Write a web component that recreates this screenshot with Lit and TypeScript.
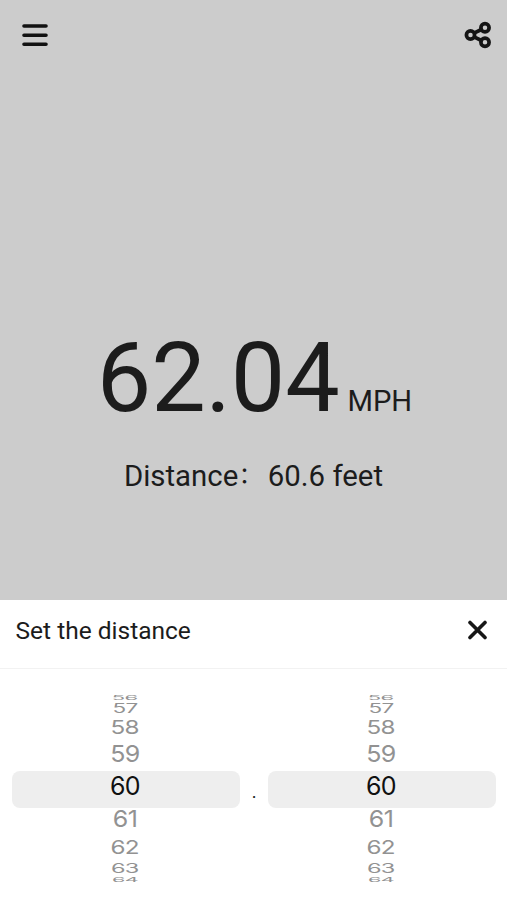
import { LitElement, html, css } from "lit";
import { customElement } from "lit/decorators.js";
import { styleMap } from "lit/directives/style-map.js";

interface Row {
  value: number;
  height: number;
  sx: number;
  sy: number;
}

// Rows of the drum: they flatten towards its upper and lower rim.
const ROWS: Row[] = [
  { value: 56, height: 5.6, sx: 0.88, sy: 0.25 },
  { value: 57, height: 15.6, sx: 0.9, sy: 0.5 },
  { value: 58, height: 23, sx: 0.97, sy: 0.77 },
  { value: 59, height: 31.2, sx: 1, sy: 0.94 },
  { value: 60, height: 33, sx: 1, sy: 1.02 },
  { value: 61, height: 32.4, sx: 1, sy: 0.94 },
  { value: 62, height: 23.4, sx: 0.97, sy: 0.77 },
  { value: 63, height: 18, sx: 0.94, sy: 0.52 },
  { value: 64, height: 5.4, sx: 0.86, sy: 0.25 },
];

@customElement("wheel-picker")
class WheelPicker extends LitElement {
  static styles = css`
    :host {
      display: block;
      position: relative;
      width: 228px;
      padding-top: 25px;
      box-sizing: border-box;
      height: 230px;
    }
    .band {
      position: absolute;
      left: 0;
      right: 0;
      top: 101px;
      height: 37px;
      border-radius: 8px;
      background: #eeeeee;
    }
    .rows {
      position: relative;
      display: flex;
      flex-direction: column;
      align-items: center;
      padding-right: 2px;
    }
    .row {
      display: flex;
      align-items: center;
      justify-content: center;
      font: 400 25px/1 Inter, sans-serif;
      letter-spacing: -0.7px;
      color: #929292;
    }
    .selected {
      color: #101010;
    }
  `;

  render() {
    return html`
      <div class="band"></div>
      <div class="rows">
        ${ROWS.map(
          (r) => html`<div
            class="row ${r.value === 60 ? "selected" : ""}"
            style=${styleMap({ height: `${r.height}px` })}
          ><span style=${styleMap({ transform: `scale(${r.sx}, ${r.sy})`, display: "block" })}>${r.value}</span></div>`
        )}
      </div>
    `;
  }
}

@customElement("app-root")
class AppRoot extends LitElement {
  static styles = css`
    :host {
      display: flex;
      flex-direction: column;
      width: 507px;
      height: 900px;
      overflow: hidden;
      background: #cccccc;
      color: #1c1c1c;
      font-family: Roboto, "Noto Sans CJK SC", sans-serif;
    }
    .bar {
      display: flex;
      justify-content: space-between;
      align-items: center;
      height: 70px;
      padding: 0 15px 0 21px;
      box-sizing: border-box;
      flex: none;
    }
    svg {
      display: block;
    }
    .reading {
      height: 530px;
      flex: none;
      display: flex;
      flex-direction: column;
      align-items: center;
      padding-top: 253px;
      box-sizing: border-box;
    }
    .speed {
      display: flex;
      align-items: baseline;
      gap: 8px;
      height: 110px;
      line-height: 110px;
      padding-left: 2px;
    }
    .number {
      font-size: 97px;
      letter-spacing: -0.2px;
    }
    .unit {
      font-size: 29.2px;
    }
    .distance {
      display: flex;
      margin-top: 23px;
      font-size: 29.4px;
      line-height: 40px;
      white-space: pre;
    }
    .colon {
      width: 29.5px;
      font: 400 23px/34px "Noto Sans CJK SC", sans-serif;
      text-indent: 0.5px;
    }
    .sheet {
      height: 300px;
      flex: none;
      background: #ffffff;
    }
    .head {
      display: flex;
      align-items: center;
      justify-content: space-between;
      height: 69px;
      padding: 0 19px 8px 15.5px;
      box-sizing: border-box;
      border-bottom: 1px solid #f2f2f2;
      font-size: 24.5px;
    }
    .wheels {
      display: flex;
      justify-content: space-between;
      padding: 1px 11px 0 12px;
    }
    .point {
      font: 400 16px/20px Inter, sans-serif;
      padding-top: 112px;
    }
  `;

  render() {
    return html`
      <div class="bar">
        <svg width="28" height="26" viewBox="0 0 28 26" fill="none" stroke="#111" stroke-width="3.6" stroke-linecap="round">
          <path d="M3 4h22M3 13.2h22M3 22.3h22" />
        </svg>
        <svg width="28" height="28" viewBox="0 0 28 28" fill="none" stroke="#151515" stroke-width="3.7">
          <circle cx="6.5" cy="14" r="4.1" />
          <circle cx="21" cy="6.8" r="4.1" />
          <circle cx="21" cy="21.3" r="4.1" />
          <path d="M10 12.2l7.4-3.7M10 15.8l7.4 3.7" />
        </svg>
      </div>
      <div class="reading">
        <div class="speed"><span class="number">62.04</span><span class="unit">MPH</span></div>
        <div class="distance"><span>Distance</span><span class="colon">：</span><span>60.6 feet</span></div>
      </div>
      <div class="sheet">
        <div class="head">
          <span>Set the distance</span>
          <svg width="21" height="21" viewBox="0 0 21 21" fill="none" stroke="#171717" stroke-width="3.6" stroke-linecap="round">
            <path d="M3 2.5l15 15M18 2.5l-15 15" />
          </svg>
        </div>
        <div class="wheels">
          <wheel-picker></wheel-picker>
          <span class="point">.</span>
          <wheel-picker></wheel-picker>
        </div>
      </div>
    `;
  }
}
